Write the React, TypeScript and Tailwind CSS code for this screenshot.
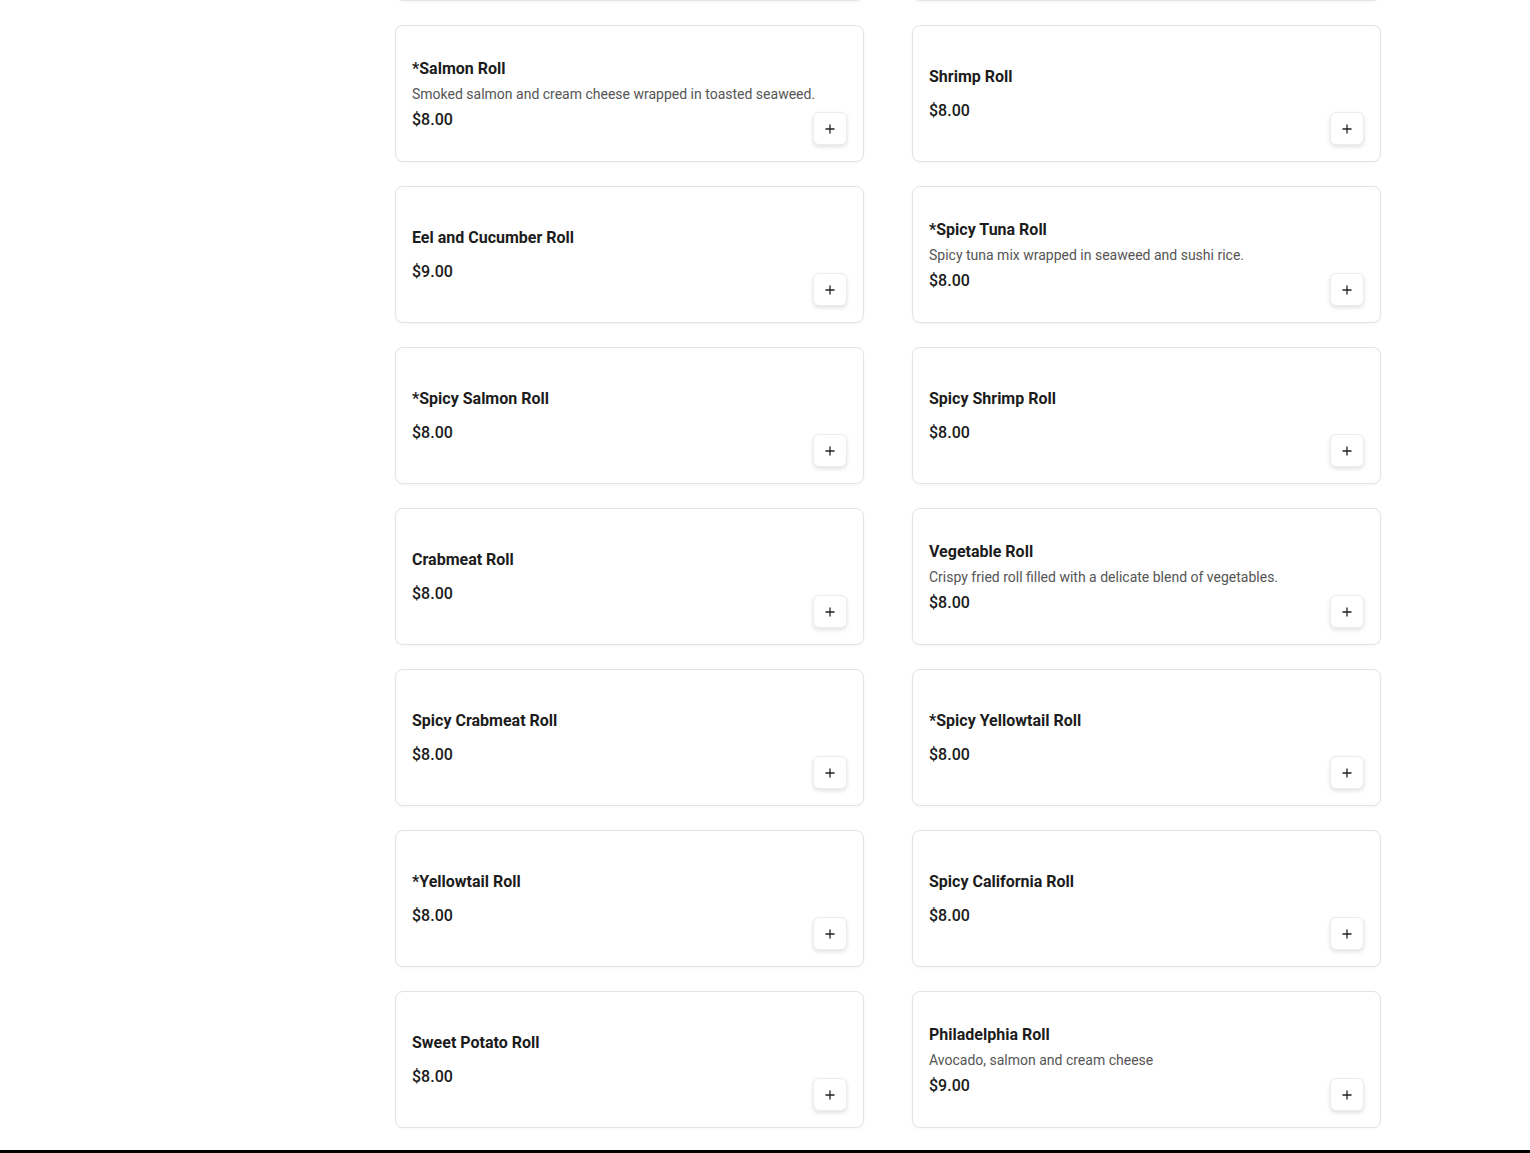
import React from "react";
import { Plus } from "lucide-react";

type Item = { name: string; desc?: string; price: string };

const items: Item[] = [
  { name: "*Salmon Roll", desc: "Smoked salmon and cream cheese wrapped in toasted seaweed.", price: "$8.00" },
  { name: "Shrimp Roll", price: "$8.00" },
  { name: "Eel and Cucumber Roll", price: "$9.00" },
  { name: "*Spicy Tuna Roll", desc: "Spicy tuna mix wrapped in seaweed and sushi rice.", price: "$8.00" },
  { name: "*Spicy Salmon Roll", price: "$8.00" },
  { name: "Spicy Shrimp Roll", price: "$8.00" },
  { name: "Crabmeat Roll", price: "$8.00" },
  { name: "Vegetable Roll", desc: "Crispy fried roll filled with a delicate blend of vegetables.", price: "$8.00" },
  { name: "Spicy Crabmeat Roll", price: "$8.00" },
  { name: "*Spicy Yellowtail Roll", price: "$8.00" },
  { name: "*Yellowtail Roll", price: "$8.00" },
  { name: "Spicy California Roll", price: "$8.00" },
  { name: "Sweet Potato Roll", price: "$8.00" },
  { name: "Philadelphia Roll", desc: "Avocado, salmon and cream cheese", price: "$9.00" },
];

const cardBox =
  "h-[137px] rounded-lg border border-[#e3e3e3] bg-white shadow-[0_1px_3px_rgba(0,0,0,0.04)]";

function MenuCard({ item }: { item: Item }) {
  return (
    <div className={`flex justify-between p-4 ${cardBox}`}>
      <div
        className={
          item.desc
            ? "flex min-w-0 flex-1 flex-col justify-center gap-[5px] pt-[2px] whitespace-nowrap"
            : "flex min-w-0 flex-1 flex-col justify-center gap-[5px] whitespace-nowrap"
        }
      >
        <h3 className="text-base leading-6 font-bold text-[#1c1c1c]">{item.name}</h3>
        <p className="text-sm leading-[17px] text-[#555]">{item.desc}</p>
        <p className="text-base leading-6 font-medium text-[#1a1a1a]">{item.price}</p>
      </div>
      <button className="flex h-[33px] w-[34px] shrink-0 items-center justify-center self-end rounded-md border border-[#ececec] bg-white shadow-[0_2px_4px_rgba(0,0,0,0.12)]">
        <Plus size={14} strokeWidth={2.2} className="text-[#222]" />
      </button>
    </div>
  );
}

export default function App() {
  return (
    <div className="min-h-screen overflow-hidden bg-white font-['Roboto','Liberation_Sans',sans-serif]">
      <div className="flex">
        {/* category sidebar is scrolled out of view */}
        <aside className="w-[395px] shrink-0" />
        <main className="-mt-[136px] grid w-[986px] grid-cols-2 gap-x-[48px] gap-y-6">
          {/* previous row, scrolled past */}
          <div className={cardBox} />
          <div className={cardBox} />
          {items.map((item) => (
            <MenuCard key={item.name} item={item} />
          ))}
        </main>
      </div>
      <footer className="mt-[22px] h-10 bg-black" />
    </div>
  );
}
